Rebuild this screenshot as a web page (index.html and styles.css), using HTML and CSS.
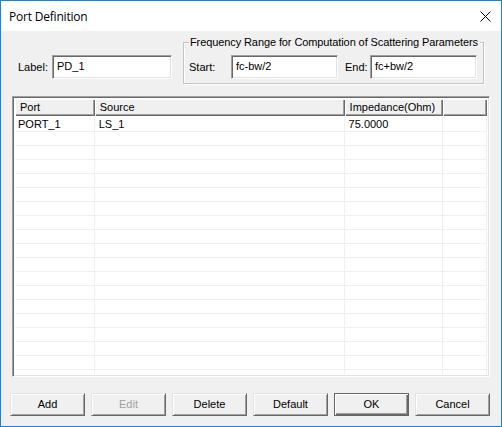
FILE: index.html
```html
<!DOCTYPE html>
<html>
<head>
<meta charset="utf-8">
<link rel="stylesheet" href="styles.css">
</head>
<body>
<div class="window">
  <div class="titlebar">
    <span class="title">Port Definition</span>
    <svg class="close" width="11" height="11" viewBox="0 0 11 11"><path d="M0.5 0.5 L10.5 10.5 M10.5 0.5 L0.5 10.5" stroke="#000" stroke-width="1" fill="none"/></svg>
  </div>
  <div class="client">
    <div class="top">
      <div class="labelfield">
        <span class="lbl lbl-label">Label:</span>
        <div class="edit edit-label">PD_1</div>
      </div>
      <div class="group">
        <span class="legend">Frequency Range for Computation of Scattering Parameters</span>
        <span class="lbl lbl-start">Start:</span>
        <div class="edit edit-range">fc-bw/2</div>
        <span class="lbl lbl-end">End:</span>
        <div class="edit edit-range">fc+bw/2</div>
      </div>
    </div>
    <div class="list">
      <div class="header">
        <div class="hcell c1">Port</div>
        <div class="hcell c2">Source</div>
        <div class="hcell c3">Impedance(Ohm)</div>
        <div class="hcell c4"></div>
      </div>
      <div class="body">
        <div class="row"><div class="cell c1">PORT_1</div><div class="cell c2">LS_1</div><div class="cell c3">75.0000</div><div class="cell c4"></div></div>
        <div class="row"><div class="cell c1"></div><div class="cell c2"></div><div class="cell c3"></div><div class="cell c4"></div></div>
        <div class="row"><div class="cell c1"></div><div class="cell c2"></div><div class="cell c3"></div><div class="cell c4"></div></div>
        <div class="row"><div class="cell c1"></div><div class="cell c2"></div><div class="cell c3"></div><div class="cell c4"></div></div>
        <div class="row"><div class="cell c1"></div><div class="cell c2"></div><div class="cell c3"></div><div class="cell c4"></div></div>
        <div class="row"><div class="cell c1"></div><div class="cell c2"></div><div class="cell c3"></div><div class="cell c4"></div></div>
        <div class="row"><div class="cell c1"></div><div class="cell c2"></div><div class="cell c3"></div><div class="cell c4"></div></div>
        <div class="row"><div class="cell c1"></div><div class="cell c2"></div><div class="cell c3"></div><div class="cell c4"></div></div>
        <div class="row"><div class="cell c1"></div><div class="cell c2"></div><div class="cell c3"></div><div class="cell c4"></div></div>
        <div class="row"><div class="cell c1"></div><div class="cell c2"></div><div class="cell c3"></div><div class="cell c4"></div></div>
        <div class="row"><div class="cell c1"></div><div class="cell c2"></div><div class="cell c3"></div><div class="cell c4"></div></div>
        <div class="row"><div class="cell c1"></div><div class="cell c2"></div><div class="cell c3"></div><div class="cell c4"></div></div>
        <div class="row"><div class="cell c1"></div><div class="cell c2"></div><div class="cell c3"></div><div class="cell c4"></div></div>
        <div class="row"><div class="cell c1"></div><div class="cell c2"></div><div class="cell c3"></div><div class="cell c4"></div></div>
        <div class="row"><div class="cell c1"></div><div class="cell c2"></div><div class="cell c3"></div><div class="cell c4"></div></div>
        <div class="row"><div class="cell c1"></div><div class="cell c2"></div><div class="cell c3"></div><div class="cell c4"></div></div>
        <div class="row"><div class="cell c1"></div><div class="cell c2"></div><div class="cell c3"></div><div class="cell c4"></div></div>
        <div class="row"><div class="cell c1"></div><div class="cell c2"></div><div class="cell c3"></div><div class="cell c4"></div></div>
        <div class="row"><div class="cell c1"></div><div class="cell c2"></div><div class="cell c3"></div><div class="cell c4"></div></div>
        <div class="row"><div class="cell c1"></div><div class="cell c2"></div><div class="cell c3"></div><div class="cell c4"></div></div>
      </div>
    </div>
    <div class="buttons">
      <div class="btn">Add</div>
      <div class="btn disabled">Edit</div>
      <div class="btn">Delete</div>
      <div class="btn">Default</div>
      <div class="btn default">OK</div>
      <div class="btn">Cancel</div>
    </div>
  </div>
</div>
</body>
</html>
```

FILE: styles.css
```css
html, body {
  margin: 0;
  padding: 0;
  background: #f0f0f0;
}
.window {
  width: 502px;
  height: 427px;
  box-sizing: border-box;
  border: 1px solid #1883d7;
  background: #f0f0f0;
  font-family: "Liberation Sans", Arial, sans-serif;
  font-size: 11px;
  color: #000;
  display: flex;
  flex-direction: column;
  overflow: hidden;
}
.titlebar {
  height: 30px;
  flex: none;
  background: #fff;
  display: flex;
  align-items: center;
  justify-content: space-between;
  padding: 0 9px 0 8px;
}
.title {
  font-family: "Open Sans", "Noto Sans", sans-serif;
  font-size: 12px;
  letter-spacing: -0.2px;
  padding-top: 1px;
}
.close {
  display: block;
  margin-right: 1px;
}
.client {
  flex: 1;
  display: flex;
  flex-direction: column;
}
.top {
  display: flex;
  align-items: flex-start;
  padding-top: 11px;
}
.labelfield {
  display: flex;
  align-items: center;
  margin-left: 17px;
  margin-top: 13px;
}
.lbl {
  display: block;
  flex: none;
}
.lbl-label { width: 34px; }
.lbl-start { width: 42px; }
.lbl-end { width: 25px; }
.edit {
  box-sizing: border-box;
  height: 24px;
  background: #fff;
  border-top: 1px solid #a0a0a0;
  border-left: 1px solid #a0a0a0;
  border-bottom: 1px solid #fff;
  border-right: 1px solid #fff;
  box-shadow: inset 1px 1px 0 #696969, inset -1px -1px 0 #e3e3e3;
  padding: 0 4px;
  line-height: 21px;
  flex: none;
  white-space: nowrap;
}
.edit-label { width: 120px; }
.edit-range { width: 107px; }
.group {
  position: relative;
  box-sizing: border-box;
  width: 301px;
  height: 42px;
  margin-left: 11px;
  border: 1px solid #c4c4c4;
  box-shadow: inset 1px 1px 0 #fff, 1px 1px 0 #fff;
  display: flex;
  align-items: center;
  padding: 12px 0 4px 5px;
}
.group .edit-range:nth-of-type(1) { margin-right: 7px; }
.legend {
  position: absolute;
  left: 5px;
  top: -8px;
  padding: 0 2px 0 1px;
  background: #f0f0f0;
  line-height: 14px;
  white-space: nowrap;
  letter-spacing: -0.1px;
}
.list {
  box-sizing: border-box;
  width: 478px;
  height: 281px;
  margin: 12px 0 0 11px;
  background: #fff;
  border-top: 1px solid #a0a0a0;
  border-left: 1px solid #a0a0a0;
  border-bottom: 1px solid #fff;
  border-right: 1px solid #fff;
  box-shadow: inset 1px 1px 0 #696969, inset -1px -1px 0 #e3e3e3;
  padding: 2px;
  display: flex;
  flex-direction: column;
  overflow: hidden;
}
.header {
  display: flex;
  height: 17px;
  flex: none;
}
.hcell {
  box-sizing: border-box;
  height: 17px;
  background: #f0f0f0;
  box-shadow: inset 1px 1px 0 #fff, inset -1px -1px 0 #696969, inset -2px -2px 0 #a0a0a0;
  padding: 0 0 0 5px;
  line-height: 16px;
  white-space: nowrap;
}
.c1 { width: 80px; }
.c2 { width: 251px; }
.c3 { width: 99px; }
.c4 { width: 44px; }
.body {
  flex: 1;
  padding-top: 2px;
  overflow: hidden;
}
.row {
  display: flex;
  box-sizing: border-box;
  height: 14px;
  border-bottom: 1px solid #f0f0f0;
}
.cell {
  box-sizing: border-box;
  height: 13px;
  border-right: 1px solid #f0f0f0;
  padding-left: 3px;
  line-height: 13px;
  white-space: nowrap;
}
.cell.c2, .cell.c3 { padding-left: 4px; }
.buttons {
  display: flex;
  gap: 6px;
  margin: 16px 0 0 9px;
}
.btn {
  box-sizing: border-box;
  width: 75px;
  height: 23px;
  background: #f0f0f0;
  border-top: 1px solid #e3e3e3;
  border-left: 1px solid #e3e3e3;
  border-bottom: 1px solid #696969;
  border-right: 1px solid #696969;
  box-shadow: inset 1px 1px 0 #fff, inset -1px -1px 0 #a0a0a0;
  text-align: center;
  line-height: 20px;
}
.btn.disabled {
  color: #a0a0a0;
}
.btn.default {
  border: 1px solid #646464;
  box-shadow: inset 1px 1px 0 #fff, inset -1px -1px 0 #696969, inset -2px -2px 0 #a0a0a0;
}
```
